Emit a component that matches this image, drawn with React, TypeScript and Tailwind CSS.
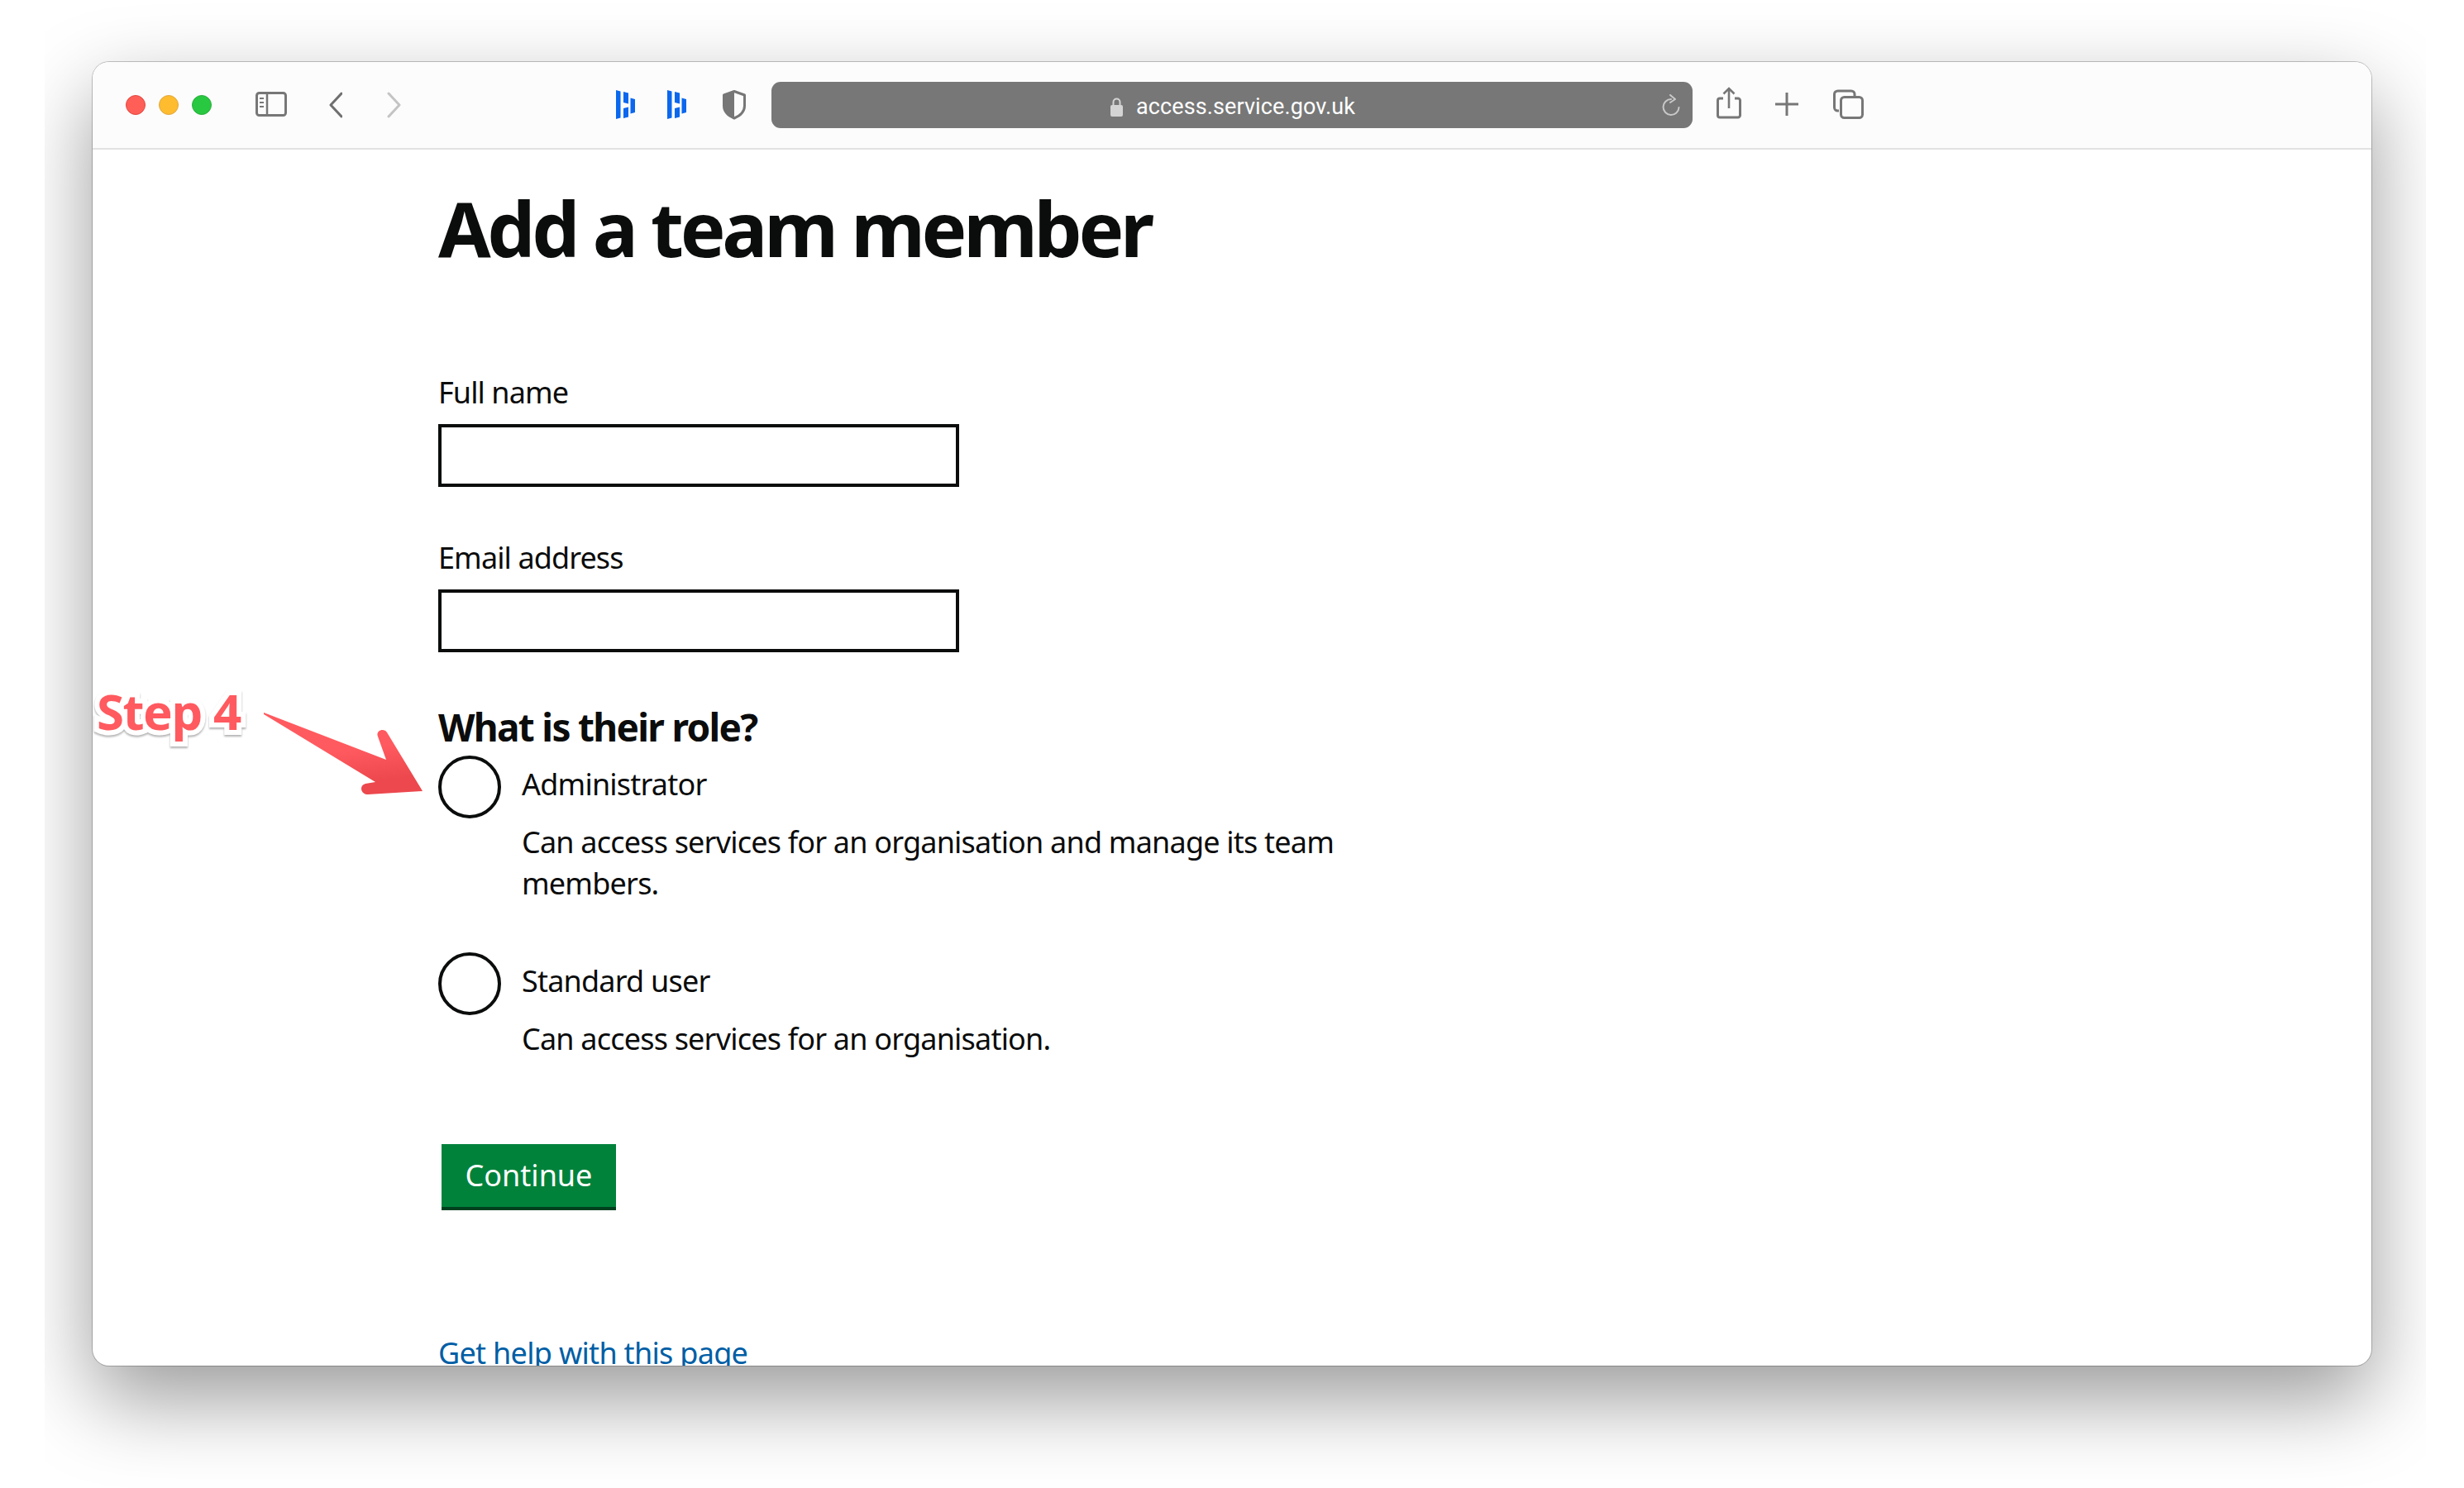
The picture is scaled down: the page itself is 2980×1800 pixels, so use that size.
const Toolbar = () => (
  <div className="flex h-[106px] items-center border-b-2 border-[#e2e2e2] bg-[#fcfcfc] pl-[40px]">
    <div className="flex gap-[16px]">
      <span className="h-[24px] w-[24px] rounded-full border border-[#e2463f] bg-[#ff5f57]" />
      <span className="h-[24px] w-[24px] rounded-full border border-[#e1a73e] bg-[#febc2e]" />
      <span className="h-[24px] w-[24px] rounded-full border border-[#2aac3e] bg-[#28c840]" />
    </div>
    {/* sidebar */}
    <svg className="ml-[53px]" width="38" height="56" viewBox="0 0 38 56" fill="none">
      <rect x="1.5" y="13.5" width="35" height="27" rx="3" stroke="#777" strokeWidth="3" />
      <path d="M14 13v28" stroke="#777" strokeWidth="2.5" />
      <path d="M5 20h5M5 25h5M5 30h5" stroke="#777" strokeWidth="2.2" />
    </svg>
    {/* back / forward */}
    <svg className="ml-[51px]" width="16" height="56" viewBox="0 0 16 56" fill="none">
      <path d="M15 14L2 28l13 14" stroke="#707070" strokeWidth="3" strokeLinecap="round" strokeLinejoin="round" />
    </svg>
    <svg className="ml-[54px]" width="17" height="56" viewBox="0 0 17 56" fill="none">
      <path d="M2 14l13 14L2 42" stroke="#c4c4c4" strokeWidth="3" strokeLinecap="round" strokeLinejoin="round" />
    </svg>
    {/* extensions */}
    <svg className="ml-[260px]" width="23" height="56" viewBox="0 0 23 56" fill="#0a67ee">
      <path d="M0 10l5.5 1.500v32L0 45zM9 12l6 1.500v13l-6-1.500zM9 32l6-1.500v12l-6 1.500zM17.500 19.500l5.500 1.500v16l-5.500 1.500z" />
    </svg>
    <svg className="ml-[39px]" width="23" height="56" viewBox="0 0 23 56" fill="#0a67ee">
      <path d="M0 10l5.500 1.500v32L0 45zM9 12l6 1.500v13l-6-1.500zM9 32l6-1.500v12l-6 1.500zM17.500 19.500l5.500 1.500v16l-5.500 1.500z" />
    </svg>
    <svg className="ml-[44px]" width="28" height="56" viewBox="0 0 28 56" fill="none">
      <path d="M14 11.500l12.500 4.500v13c0 7-5.500 12-12.500 15C7 41 1.500 36 1.500 29V16z" stroke="#777" strokeWidth="3" strokeLinejoin="round" />
      <path d="M14 11.500L1.500 16v13c0 7 5.500 12 12.500 15z" fill="#777" />
    </svg>
    {/* address bar */}
    <div className="relative ml-[31px] flex h-[56px] w-[1114px] items-center justify-center rounded-[11px] bg-[#777777] pl-[2px]">
      <svg width="15" height="24" viewBox="0 0 15 24" fill="none" className="mt-[4px]">
        <path d="M3.500 11V6.500a4 4 0 0 1 8 0V11" stroke="#d4d4d4" strokeWidth="2" />
        <rect x="0" y="10" width="15" height="14" rx="2" fill="#d4d4d4" />
      </svg>
      <span className="ml-[16px] mt-[3px] font-['Roboto',sans-serif] text-[27px] leading-[36px] tracking-[0.1px] text-white">access.service.gov.uk</span>
      <svg className="absolute right-[13px] top-[15px]" width="26" height="27" viewBox="0 0 26 27" fill="none">
        <path d="M13 6a9.500 9.500 0 1 0 9.500 10" stroke="#c8c8c8" strokeWidth="2" strokeLinecap="round" />
        <path d="M12 1l6 5-6 4" stroke="#c8c8c8" strokeWidth="2" strokeLinecap="round" strokeLinejoin="round" />
      </svg>
    </div>
    {/* share, new tab, tabs */}
    <svg className="ml-[29px]" width="30" height="56" viewBox="0 0 30 56" fill="none">
      <path d="M8 20H4a2.500 2.500 0 0 0-2.500 2.500v18A2.500 2.500 0 0 0 4 43h22a2.500 2.500 0 0 0 2.500-2.500v-18A2.500 2.500 0 0 0 26 20h-4" stroke="#777" strokeWidth="3" />
      <path d="M15 32V9M8.500 14.500L15 8l6.500 6.500" stroke="#777" strokeWidth="2.600" />
    </svg>
    <svg className="ml-[41px]" width="28" height="56" viewBox="0 0 28 56" fill="none">
      <path d="M14 13v28M0 27h28" stroke="#777" strokeWidth="3" />
    </svg>
    <svg className="ml-[42px]" width="37" height="56" viewBox="0 0 37 56" fill="none">
      <path d="M7 35H5.500a4 4 0 0 1-4-4V15a4 4 0 0 1 4-4H22a4 4 0 0 1 4 4v2" stroke="#777" strokeWidth="3" />
      <rect x="9.500" y="18.500" width="26" height="25" rx="4" stroke="#777" strokeWidth="3" />
    </svg>
  </div>
);

const TextInput = ({ label, className }: { label: string; className: string }) => (
  <div className={className}>
    <label className="block text-[36px] leading-[50px] tracking-[-0.9px]">{label}</label>
    <input type="text" className="mt-[13px] block h-[76px] w-[630px] border-4 border-[#0b0c0c] bg-white" />
  </div>
);

const RoleOption = ({ title, hint, className }: { title: string; hint: string; className: string }) => (
  <label className={`flex gap-[25px] ${className}`}>
    <input type="radio" name="role" className="h-[76px] w-[76px] shrink-0 appearance-none rounded-full border-4 border-[#0b0c0c] bg-white" />
    <div className="w-[1000px] pt-[10px] text-[36px] leading-[50px] tracking-[-0.8px]">
      <div>{title}</div>
      <div className="mt-[20px]">{hint}</div>
    </div>
  </label>
);

export default function App() {
  return (
    <div className="h-[1800px] w-[2980px] bg-white pl-[54px] font-['Noto_Sans',sans-serif] text-[#0b0c0c]">
      <div className="relative h-[1800px] w-[2880px] overflow-hidden pl-[58px] pt-[75px]">
        <div className="h-[1577px] w-[2756px] overflow-hidden rounded-[20px] bg-white shadow-[0_0_0_1px_rgba(0,0,0,0.22),0_40px_100px_0_rgba(0,0,0,0.4)]">
          <Toolbar />
          <main className="pl-[418px]">
            <h1 className="mt-[45px] text-[92px] font-bold leading-[100px] tracking-[-4.3px]">Add a team member</h1>
            <TextInput label="Full name" className="mt-[124px]" />
            <TextInput label="Email address" className="mt-[61px]" />
            <h2 className="mt-[62px] text-[46px] font-bold leading-[56px] tracking-[-1.7px]">What is their role?</h2>
            <RoleOption
              className="mt-[7px]"
              title="Administrator"
              hint="Can access services for an organisation and manage its team members."
            />
            <RoleOption className="mt-[58px]" title="Standard user" hint="Can access services for an organisation." />
            <button className="ml-[4px] mt-[102px] block h-[80px] w-[211px] border-b-4 border-[#00401e] bg-[#00823b] text-[36px] leading-[50px] text-white">
              Continue
            </button>
            <a className="mt-[148px] block text-[36px] leading-[50px] tracking-[-0.7px] text-[#005ea5]">Get help with this page</a>
          </main>
        </div>

        {/* annotation */}
        <span className="absolute left-[63px] top-[820px] text-[60px] font-bold leading-[80px] tracking-[-1.5px] text-[#ff5a5f] drop-shadow-[0_2px_1px_rgba(0,0,0,0.3)] [-webkit-text-stroke:12px_white] [paint-order:stroke_fill]">
          Step 4
        </span>
        <svg className="absolute left-[265px] top-[862px]" width="192" height="100" viewBox="0 0 192 100">
          <defs>
            <linearGradient id="arrow" x1="0.55" y1="0.45" x2="0.65" y2="0.85">
              <stop offset="0" stopColor="#ff5a5f" />
              <stop offset="1" stopColor="#ec484d" />
            </linearGradient>
          </defs>
          <path
            d="M0 0l148 57-10-28c-3-7 7-11 11-5l43 71-66 4c-9 0-11-11-3-13l12-2L0 2z"
            fill="url(#arrow)"
          />
        </svg>
      </div>
    </div>
  );
}
